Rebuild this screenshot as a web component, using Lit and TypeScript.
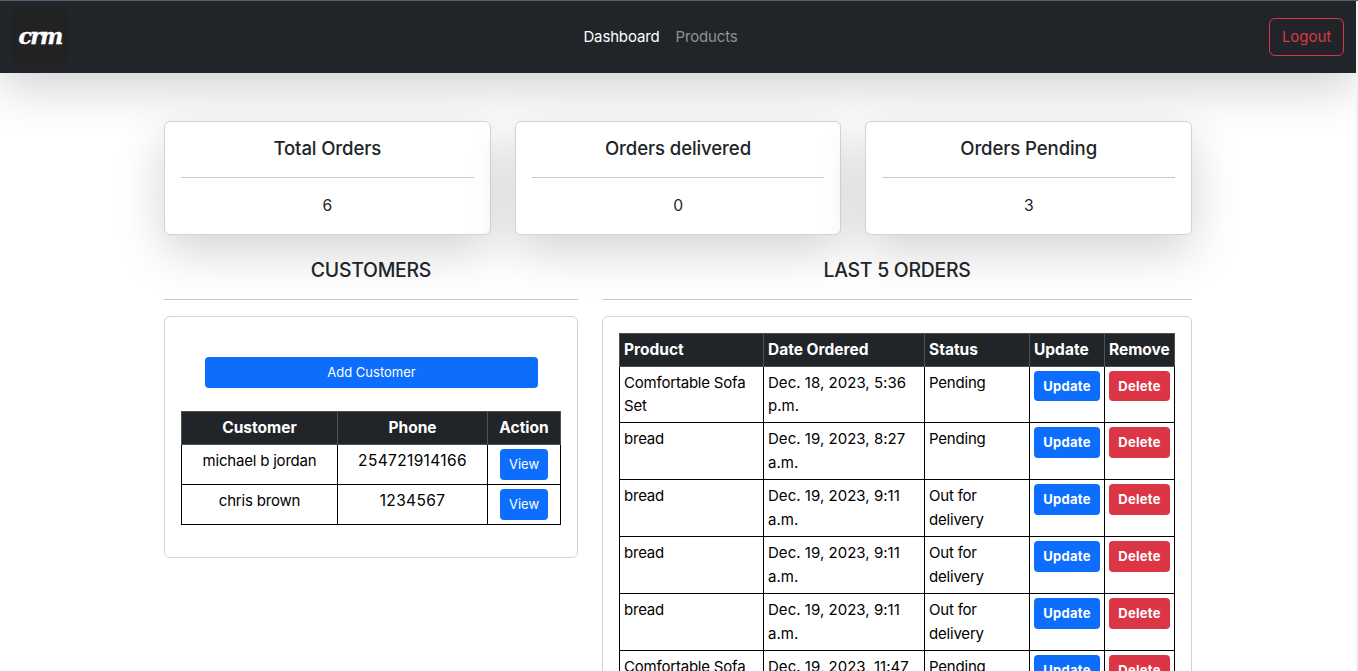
import { LitElement, html, css } from "lit";
import { customElement } from "lit/decorators.js";

const stats = [
  { title: "Total Orders", value: 6 },
  { title: "Orders delivered", value: 0 },
  { title: "Orders Pending", value: 3 },
];

const customers = [
  { name: "michael b jordan", phone: "254721914166" },
  { name: "chris brown", phone: "1234567" },
];

const orders = [
  { product: "Comfortable Sofa Set", date: "Dec. 18, 2023, 5:36 p.m.", status: "Pending" },
  { product: "bread", date: "Dec. 19, 2023, 8:27 a.m.", status: "Pending" },
  { product: "bread", date: "Dec. 19, 2023, 9:11 a.m.", status: "Out for delivery" },
  { product: "bread", date: "Dec. 19, 2023, 9:11 a.m.", status: "Out for delivery" },
  { product: "bread", date: "Dec. 19, 2023, 9:11 a.m.", status: "Out for delivery" },
  { product: "Comfortable Sofa Set", date: "Dec. 19, 2023, 11:47 a.m.", status: "Pending" },
];

@customElement("app-root")
export class AppRoot extends LitElement {
  static styles = css`
    :host {
      display: block;
      box-sizing: border-box;
      height: 671px;
      overflow: hidden;
      border-top: 1px solid #5a5f61;
      background: #f1f1f1;
      padding-right: 2px;
      font-family: Inter, "Liberation Sans", sans-serif;
      font-size: 15px;
      line-height: 24px;
      letter-spacing: -0.2px;
      color: #212529;
    }
    * { box-sizing: border-box; }
    .page { height: 670px; overflow: hidden; background: #fff; }
    .nav {
      display: grid;
      grid-template-columns: 1fr auto 1fr;
      align-items: center;
      height: 72px;
      padding: 0 12px;
      background: #212529;
      box-shadow: 0 16px 48px rgba(0, 0, 0, 0.175);
    }
    .logo {
      width: 56px;
      height: 56px;
      border-radius: 5px;
      background: #222;
      color: #fff;
      font: italic 700 22px/54px "DejaVu Serif", serif;
      letter-spacing: -1.8px;
      text-align: center;
      -webkit-text-stroke: 0.4px #fff;
    }
    .links { display: flex; gap: 16px; padding-right: 35px; letter-spacing: -0.15px; }
    .link { color: #909294; }
    .link.active { color: #fff; }
    .logout {
      justify-self: end;
      width: 75px;
      height: 38px;
      padding: 6px 0;
      border: 1px solid #dc3545;
      border-radius: 6px;
      text-align: center;
      letter-spacing: -0.05px;
      color: #dc3545;
    }
    .container { width: 1028px; margin: 48px auto 0; }
    .stats { display: grid; grid-template-columns: repeat(3, 1fr); gap: 24px; }
    .card {
      background: #fff;
      border: 1px solid #d3d3d4;
      border-radius: 6px;
      padding: 16px;
    }
    .stat {
      height: 114px;
      padding-top: 14px;
      text-align: center;
      box-shadow: 0 16px 48px rgba(0, 0, 0, 0.175);
    }
    .stat-title { font-size: 18.6px; font-weight: 500; letter-spacing: -0.12px; }
    .stat-value { font-size: 15.7px; }
    .rule { height: 1px; background: #c7c8c9; }
    .stat .rule { margin: 17px 0 16px; }
    .columns {
      position: relative;
      display: grid;
      grid-template-columns: 414px 590px;
      gap: 24px;
      align-items: start;
      padding-top: 23px;
    }
    .heading {
      text-align: center;
      font-size: 19.4px;
      font-weight: 500;
      letter-spacing: -0.25px;
      margin-bottom: 17px;
    }
    .columns .card { margin-top: 16px; }
    .customers { height: 242px; padding-top: 40px; }
    .btn {
      display: block;
      height: 31px;
      padding: 5px 8px;
      border-radius: 4px;
      background: #0d6efd;
      color: #fff;
      font-size: 13px;
      line-height: 21px;
      letter-spacing: 0;
      text-align: center;
      white-space: nowrap;
    }
    .btn.danger { background: #dc3545; }
    .btn.wide { margin: 0 23px 23px 24px; }
    table {
      border-collapse: collapse;
      table-layout: fixed;
      color: #000;
    }
    th, td {
      padding: 4px;
      border: 1px solid #000;
      vertical-align: top;
      font-weight: 400;
    }
    th {
      height: 33px;
      background: #212529;
      border-color: #4d5154;
      color: #fff;
      font-size: 15.5px;
      font-weight: 700;
      letter-spacing: 0;
      text-align: left;
    }
    .people { width: 380px; }
    .people th, .people td { text-align: center; }
    .people td { height: 40px; }
    .people td.phone { font-size: 15.5px; letter-spacing: 0.35px; }
    .people .btn { width: 48px; margin: 0 auto; }
    .orders { width: 556px; }
    .orders td { height: 57px; }
    .orders td.date { letter-spacing: 0.03px; }
    .orders tbody tr:first-child td,
    .orders tbody tr:last-child td { height: 56px; line-height: 23.4px; }
    .orders .btn { font-weight: 700; padding: 5px 0; letter-spacing: 0.3px; line-height: 21px; }
    .orders tbody tr:first-child .btn { height: 30px; }
    .c156 { width: 156px; }
    .c150 { width: 150px; }
    .c73 { width: 73px; }
    .c144 { width: 144px; }
    .c161 { width: 161px; }
    .c105 { width: 105px; }
    .c75 { width: 75px; }
    .c70 { width: 70px; }
  `;

  render() {
    return html`
      <div class="page">
        <nav class="nav">
          <div class="logo">crm</div>
          <div class="links">
            <span class="link active">Dashboard</span>
            <span class="link">Products</span>
          </div>
          <div class="logout">Logout</div>
        </nav>
        <main class="container">
          <section class="stats">
            ${stats.map((s) => html`
              <div class="card stat">
                <div class="stat-title">${s.title}</div>
                <div class="rule"></div>
                <div class="stat-value">${s.value}</div>
              </div>`)}
          </section>
          <section class="columns">
            <div>
              <div class="heading">CUSTOMERS</div>
              <div class="rule"></div>
              <div class="card customers">
                <div class="btn wide">Add Customer</div>
                <table class="people">
                  <colgroup><col class="c156" /><col class="c150" /><col class="c73" /></colgroup>
                  <thead><tr><th>Customer</th><th>Phone</th><th>Action</th></tr></thead>
                  <tbody>
                    ${customers.map((c) => html`
                      <tr><td>${c.name}</td><td class="phone">${c.phone}</td><td><div class="btn">View</div></td></tr>`)}
                  </tbody>
                </table>
              </div>
            </div>
            <div>
              <div class="heading">LAST 5 ORDERS</div>
              <div class="rule"></div>
              <div class="card">
                <table class="orders">
                  <colgroup>
                    <col class="c144" /><col class="c161" /><col class="c105" /><col class="c75" /><col class="c70" />
                  </colgroup>
                  <thead>
                    <tr><th>Product</th><th>Date Ordered</th><th>Status</th><th>Update</th><th>Remove</th></tr>
                  </thead>
                  <tbody>
                    ${orders.map((o) => html`
                      <tr>
                        <td>${o.product}</td>
                        <td class="date">${o.date}</td>
                        <td>${o.status}</td>
                        <td><div class="btn">Update</div></td>
                        <td><div class="btn danger">Delete</div></td>
                      </tr>`)}
                  </tbody>
                </table>
              </div>
            </div>
          </section>
        </main>
      </div>
    `;
  }
}
